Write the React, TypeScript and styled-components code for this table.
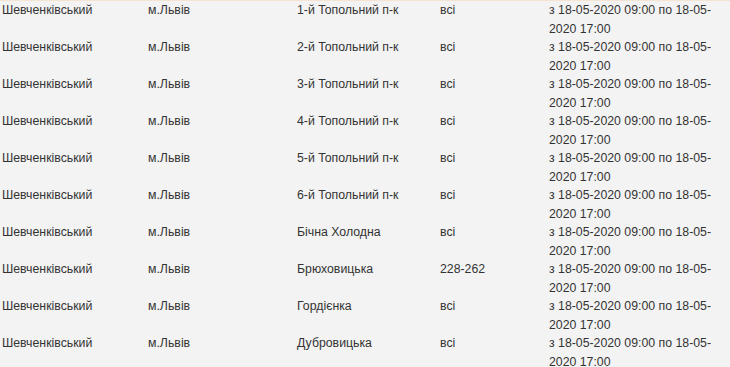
import React from "react";
import styled, {createGlobalStyle} from "styled-components";

const GlobalStyle = createGlobalStyle`
  html, body {
    margin: 0;
    padding: 0;
    background: #f3f3f3;
  }
`;

const Page = styled.div`
  width: 730px;
  height: 367px;
  overflow: hidden;
  background: #f3f3f3;
  border-top: 1px solid #f6e4d3;
  box-sizing: border-box;
`;

const Table = styled.div`
  display: grid;
  grid-template-columns: 146px 149px 143px 109px 172px;
  margin-left: 2px;
  font-family: "Liberation Sans", Arial, sans-serif;
  font-size: 12.3px;
  line-height: 18.5px;
  color: #333333;
`;

const Cell = styled.div`
  min-height: 37px;
`;

const DISTRICT = "Шевченківський";
const CITY = "м.Львів";
const PERIOD = "з 18-05-2020 09:00 по 18-05-2020 17:00";

const rows: {street: string; houses: string}[] = [
    {street: "1-й Топольний п-к", houses: "всі"},
    {street: "2-й Топольний п-к", houses: "всі"},
    {street: "3-й Топольний п-к", houses: "всі"},
    {street: "4-й Топольний п-к", houses: "всі"},
    {street: "5-й Топольний п-к", houses: "всі"},
    {street: "6-й Топольний п-к", houses: "всі"},
    {street: "Бічна Холодна", houses: "всі"},
    {street: "Брюховицька", houses: "228-262"},
    {street: "Гордієнка", houses: "всі"},
    {street: "Дубровицька", houses: "всі"},
];

export default function App() {
    return (
        <Page>
            <GlobalStyle/>
            <Table>
                {rows.map((row) => (
                    <React.Fragment key={row.street}>
                        <Cell>{DISTRICT}</Cell>
                        <Cell>{CITY}</Cell>
                        <Cell>{row.street}</Cell>
                        <Cell>{row.houses}</Cell>
                        <Cell>{PERIOD}</Cell>
                    </React.Fragment>
                ))}
            </Table>
        </Page>
    );
}
